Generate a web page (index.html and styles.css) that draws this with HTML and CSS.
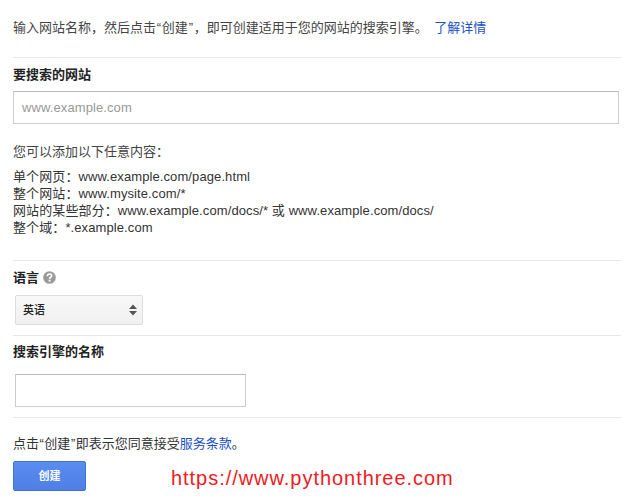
FILE: index.html
```html
<!DOCTYPE html>
<html lang="zh-CN">
<head>
<meta charset="utf-8">
<title>创建搜索引擎</title>
<link rel="stylesheet" href="styles.css">
</head>
<body>
<main class="page">
  <section class="section intro">
    <p class="intro-text">输入网站名称，然后点击<span class="q">“</span>创建<span class="q">”</span>，即可创建适用于您的网站的搜索引擎。 <a href="#" class="link link-more">了解详情</a></p>
  </section>
  <section class="section sites">
    <h2 class="label">要搜索的网站</h2>
    <div class="field field-wide">www.example.com</div>
    <p class="hint">您可以添加以下任意内容：</p>
    <ul class="examples">
      <li>单个网页：www.example.com/page.html</li>
      <li>整个网站：www.mysite.com/*</li>
      <li>网站的某些部分：www.example.com/docs/* 或 www.example.com/docs/</li>
      <li>整个域：*.example.com</li>
    </ul>
  </section>
  <section class="section language">
    <h2 class="label label-help">语言
      <svg class="help" viewBox="0 0 14 14" width="13" height="13" aria-hidden="true"><circle cx="7" cy="7" r="6.8" fill="#999"/><path d="M4.7 5.5C4.8 4 5.8 3.2 7.1 3.2 8.5 3.2 9.4 4.1 9.4 5.2 9.4 6.7 7.3 6.8 7.1 8.4" fill="none" stroke="#fff" stroke-width="1.8"/><rect x="6.1" y="9.4" width="2" height="2" fill="#fff"/></svg>
    </h2>
    <div class="select">
      <span class="select-value">英语</span>
      <svg class="arrows" viewBox="0 0 8 12" width="8" height="12" aria-hidden="true"><path d="M4 0.5 8 5H0Z M0 7H8L4 11.5Z" fill="#555"/></svg>
    </div>
  </section>
  <section class="section engine">
    <h2 class="label">搜索引擎的名称</h2>
    <div class="field field-name"></div>
  </section>
  <section class="section terms">
    <p class="terms-text">点击<span class="q q-tight">“</span>创建<span class="q q-tight">”</span>即表示您同意接受<a href="#" class="link">服务条款</a>。</p>
    <button class="create" type="button">创建</button>
  </section>
</main>
<div class="watermark">https://www.pythonthree.com</div>
</body>
</html>
```
FILE: styles.css
```css
* { box-sizing: border-box; }
html, body { margin: 0; padding: 0; background: #fff; }
body {
  position: relative;
  height: 500px;
  overflow: hidden;
  font-family: "Liberation Sans", "Noto Sans CJK SC", sans-serif;
  font-size: 13px;
  color: #333;
}
.page { width: 608px; margin-left: 13px; }
.section { border-bottom: 1px solid #e8e8e8; }
.section:last-child { border-bottom: 0; }
.intro { height: 58px; padding-top: 19px; }
.intro-text { margin: 0; line-height: 18px; color: #444; }
.q { padding: 0 .75px; }
.q-tight { padding: 0 .5px; }
.link { color: #1a50c8; text-decoration: none; }
.link-more { margin-left: 3px; }
.sites { height: 203px; padding-top: 8px; }
.label { margin: 0; font-size: 13px; line-height: 18px; font-weight: 700; color: #222; }
.field { background: #fff; border: 1px solid #ccc; border-top-color: #bbb; }
.field-wide {
  width: 606px; height: 33px; margin-top: 7px;
  padding-left: 8px; line-height: 31px; color: #999; letter-spacing: .1px;
}
.hint { margin: 19px 0 0; line-height: 18px; color: #444; }
.examples { list-style: none; margin: 7px 0 0; padding: 0; line-height: 17px; color: #333; letter-spacing: .1px; }
.language { height: 75px; padding-top: 8px; }
.label-help { display: flex; align-items: center; gap: 4px; }
.help { display: block; margin-top: -2px; }
.select {
  display: flex; align-items: center; justify-content: space-between;
  width: 128px; height: 30px; margin: 8px 0 0 2px; padding: 0 5px 0 7px;
  border: 1px solid #ddd; border-radius: 2px;
  background: linear-gradient(#f8f8f8, #f0f0f0);
  font-size: 11px; font-weight: 500; color: #222;
}
.select-value { padding-bottom: 2px; }
.engine { height: 82px; padding-top: 7px; }
.field-name { width: 231px; height: 33px; margin: 13px 0 0 2px; }
.terms { padding-top: 17px; }
.terms-text { margin: 0; line-height: 18px; color: #333; }
.create {
  display: block; width: 73px; height: 30px; margin-top: 8px; padding: 0 0 2px;
  border: 1px solid #3f73d8; border-radius: 2px;
  background: linear-gradient(#5a8df0, #4d7fe4);
  color: #fff; font: 700 11px "Liberation Sans", "Noto Sans CJK SC", sans-serif;
}
.watermark {
  position: absolute; left: 171px; top: 467px;
  font-size: 20px; line-height: 22px; letter-spacing: .96px; color: #f01a22;
}
```
